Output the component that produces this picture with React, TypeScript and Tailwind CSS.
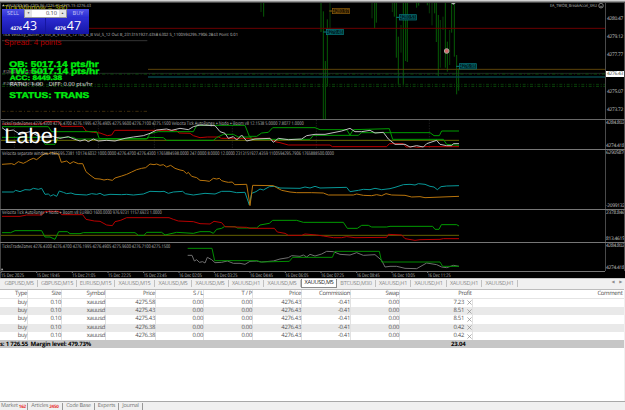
import type { ReactNode } from "react";
import clsx from "clsx";

const chartTabs = [
  { name: "GBPUSD,M5", width: "w-[37px]" },
  { name: "GBPUSD,M15", width: "w-[39px]" },
  { name: "EURUSD,M15", width: "w-[38px]" },
  { name: "XAUUSD,M15", width: "w-[40px]" },
  { name: "XAUUSD,M5", width: "w-[37px]" },
  { name: "XAUUSD,M5", width: "w-[37px]" },
  { name: "XAUUSD,H1", width: "w-[35px]" },
  { name: "XAUUSD,M5", width: "w-[37px]" },
  { name: "XAUUSD,M5", width: "w-[36px]", active: true },
  { name: "BTCUSD,M30", width: "w-[39px]" },
  { name: "XAUUSD,H1", width: "w-[35px]" },
  { name: "XAUUSD,H1", width: "w-[36px]" },
  { name: "XAUUSD,H1", width: "w-[35px]" },
  { name: "XAUUSD,H1", width: "w-[36px]" },
];

const headers = [
  "Type",
  "Size",
  "Symbol",
  "Price",
  "S / L",
  "T / P",
  "Price",
  "Commission",
  "Swap",
  "Profit",
  "Comment",
];

const positions = [
  { open: "4275.58", profit: "7.23" },
  { open: "4275.43", profit: "8.51" },
  { open: "4275.43", profit: "8.51" },
  { open: "4276.38", profit: "0.42" },
  { open: "4276.38", profit: "0.42" },
];

const times = [
  { x: 3, label: "15 Dec 2025" },
  { x: 110, label: "15 Dec 19:45" },
  { x: 217, label: "15 Dec 21:05" },
  { x: 324, label: "15 Dec 22:25" },
  { x: 431, label: "15 Dec 23:45" },
  { x: 537, label: "16 Dec 02:05" },
  { x: 643, label: "16 Dec 03:25" },
  { x: 750, label: "16 Dec 04:45" },
  { x: 856, label: "16 Dec 06:05" },
  { x: 963, label: "16 Dec 07:25" },
  { x: 1070, label: "16 Dec 08:45" },
  { x: 1176, label: "16 Dec 10:05" },
  { x: 1283, label: "16 Dec 11:25" },
];

// x, high, low, dim
const bars: [number, number, number, boolean?][] = [
  [783, 9, 36, true],
  [791, 9, 50],
  [963, 9, 96],
  [970, 34, 357],
  [976, 183, 357],
  [982, 58, 258],
  [990, 9, 90, true],
  [1116, 9, 55, true],
  [1124, 9, 85],
  [1129, 9, 68],
  [1177, 9, 36, true],
  [1183, 9, 50],
  [1189, 9, 173],
  [1195, 110, 256],
  [1203, 75, 158, true],
  [1210, 9, 256],
  [1217, 9, 183],
  [1222, 9, 186],
  [1250, 9, 23],
  [1256, 9, 17],
  [1282, 9, 16],
  [1288, 9, 40, true],
  [1296, 9, 76, true],
  [1304, 9, 40],
  [1309, 9, 126],
  [1315, 45, 228],
  [1321, 60, 203, true],
  [1329, 50, 90, true],
  [1336, 9, 203],
  [1342, 125, 215],
  [1349, 90, 195, true],
  [1355, 9, 98],
  [1363, 9, 170],
  [1370, 165, 283],
  [1376, 205, 272],
];

const cell = "flex items-center justify-end border-r border-[#e2e2e2]";
const columns =
  "grid grid-cols-[28px_34px_44px_50px_48px_49px_49px_49px_49px_73px_1fr]";

// Plot coordinates run at three units per pixel so the lines can sit between pixels.
function Pane({
  className,
  viewBox,
  scale,
  children,
}: {
  className: string;
  viewBox: string;
  scale?: ReactNode;
  children: ReactNode;
}) {
  return (
    <div className={clsx("flex w-full shrink-0", className)}>
      <svg
        viewBox={viewBox}
        preserveAspectRatio="none"
        className="h-full w-[605px] shrink-0"
        fontFamily="'Open Sans', sans-serif"
      >
        {children}
      </svg>
      <div className="flex h-full min-w-0 flex-1 flex-col overflow-hidden border-x border-[#4a4a4a] text-[4.9px] leading-[6px] tracking-[-0.3px] whitespace-nowrap text-[#c4c4c4]">
        {scale}
      </div>
    </div>
  );
}

function Plot({ color, points }: { color: string; points: string }) {
  return (
    <polyline
      points={points}
      fill="none"
      stroke={color}
      strokeWidth="3"
      strokeLinejoin="round"
    />
  );
}

function Txt({
  x,
  y,
  w,
  size = 15,
  fill = "#bdbdbd",
  children,
  ...rest
}: {
  x: number;
  y: number;
  w: number;
  size?: number;
  fill?: string;
  children: string;
  fontWeight?: string;
  fontFamily?: string;
  stroke?: string;
}) {
  return (
    <text
      x={x}
      y={y}
      textLength={w}
      lengthAdjust="spacingAndGlyphs"
      fontSize={size}
      fill={fill}
      {...rest}
    >
      {children}
    </text>
  );
}

function PriceTag({
  x,
  y,
  color,
  fill,
  label,
}: {
  x: number;
  y: number;
  color: string;
  fill: string;
  label: string;
}) {
  return (
    <g>
      <path d={`M${x - 9} ${y + 8}h9`} stroke={color} strokeWidth="3" />
      <rect x={x} y={y} width="51" height="16" fill={fill} stroke={color} strokeWidth="2" />
      <Txt x={x + 2} y={y + 14} w={47} size={17} fill={color}>
        {label}
      </Txt>
    </g>
  );
}

function OneClickTrading() {
  return (
    <div className="absolute top-[6px] left-[2px] flex h-[25px] w-[87px] flex-col bg-[#1616a0] font-['Open_Sans',sans-serif] text-white">
      <div className="flex h-[9px] shrink-0 items-center text-[5.6px] leading-none text-[#c4c4f4]">
        <div className="flex h-full w-[22px] items-center justify-center bg-gradient-to-b from-[#5050e8] to-[#2828d0]">
          SELL
        </div>
        <div className="flex h-full w-[43px] items-center border border-[#999] bg-white text-[#444]">
          <span className="flex h-full w-[7px] items-center justify-center bg-[#e4e4e4] text-[3px]">▼</span>
          <span className="flex-1 pr-[2px] text-right">0.10</span>
          <span className="flex h-full w-[7px] items-center justify-center bg-[#e4e4e4] text-[3px]">▲</span>
        </div>
        <div className="flex h-full flex-1 items-center justify-center bg-gradient-to-b from-[#5050e8] to-[#2828d0]">
          BUY
        </div>
      </div>
      <div className="flex h-[16px] gap-px">
        {["43", "47"].map((pips) => (
          <div
            key={pips}
            className="flex flex-1 items-baseline justify-end gap-px bg-gradient-to-b from-[#2c2cd2] to-[#1414a4] pr-[8px] leading-[16px]"
          >
            <span className="text-[5px] font-bold">4276</span>
            <span className="text-[12.4px]">{pips}</span>
          </div>
        ))}
      </div>
    </div>
  );
}

function PricePane() {
  const bold = {
    fontWeight: "bold",
    fontFamily: "'Liberation Sans', Arial, sans-serif",
    fill: "#00f010",
    stroke: "#00f010",
  };

  return (
    <div className="relative shrink-0">
      <Pane
        className="h-[117px] border-b border-[#686868]"
        viewBox="0 9 1815 348"
        scale={
          <div className="flex flex-col gap-[12.2px] pt-[13px] pl-[1px]">
            <span>4280.47</span>
            <span>4279.12</span>
            <span>4277.77</span>
            <span className="-ml-[1px] bg-white pl-[1px] text-[#444]">4276.43</span>
            <span>4275.07</span>
            <span>4273.72</span>
          </div>
        }
      >
        <g strokeWidth="3">
          {bars.map(([x, high, low, dim]) => (
            <path key={x} d={`M${x} ${high}V${low}`} stroke={dim ? "#083c08" : "#065c06"} />
          ))}
          <path d="M267 85H1815" stroke="#6c0000" />
          <path d="M6 122H442" stroke="#333" />
          <path d="M444 208H1815" stroke="#5d440a" />
          <path d="M6 220H1815" stroke="#3a3a40" strokeWidth="2" />
          <path d="M6 222H1815" stroke="#0a4d0a" strokeDasharray="10 6 3 6" />
          <path d="M444 231H1815" stroke="#06454a" strokeWidth="5" />
          <path d="M6 253H1815" stroke="#093a09" strokeDasharray="9 5 3 5" />
          <path d="M6 259H1815" stroke="#0a480a" strokeDasharray="9 5 3 5" />
          <path d="M6 334H442" stroke="#3d2c0c" strokeDasharray="10 6 3 6" />
        </g>

        <PriceTag x={997} y={25} color="#92600c" fill="#241700" label="4280.97" />
        <PriceTag x={979} y={88} color="#078086" fill="#002428" label="4279.48" />
        <PriceTag x={1198} y={44} color="#078086" fill="#002428" label="4280.53" />
        <PriceTag x={1378} y={191} color="#078086" fill="#002428" label="4276.98" />
        <circle cx="1340" cy="153" r="7" fill="#cf6868" stroke="#a9a9a0" strokeWidth="3" />
        <path d="M1353 9h14l-7 5z" fill="#bbb" />

        <path d="M6 19l4-6 4 6z" fill="#ccc" />
        <Txt x={12} y={30} w={190} size={22} fill="#aaa400" fontFamily="'Liberation Sans', Arial, sans-serif">
          TickWindow = 360
        </Txt>
        <Txt x={20} y={20} w={253} size={13}>
          XAUUSD,M5  4275.96 4276.71 4275.15 4276.43
        </Txt>
        <Txt x={8} y={108} w={706} size={13}>
          Tick Velocity_Buffer_0 Vol_B_9 Vol_S_12 Tot_B_B Vol_S_12 Out B_2313151927.4358 6302 S_1100594295.7906 2843 Point 0.01
        </Txt>
        <Txt x={12} y={136} w={172} size={24} fill="#b80000" fontFamily="'Liberation Sans', Arial, sans-serif">
          Spread: 4 points
        </Txt>
        <Txt x={10} y={220} w={120} size={13}>
          #125603491 buy 0.10 xauusd
        </Txt>
        <Txt x={10} y={255} w={112} size={13}>
          #125603174 buy 0.10 xauusd
        </Txt>
        <Txt x={28} y={201} w={268} size={25} {...bold}>
          OB: 5017.14 pts/hr
        </Txt>
        <Txt x={28} y={223} w={270} size={25} {...bold}>
          TW: 5017.14 pts/hr
        </Txt>
        <Txt x={29} y={240} w={157} size={20} {...bold}>
          ACC: 8449.38
        </Txt>
        <Txt x={29} y={257} w={100} size={17} fill="#e0e0e0">
          RATIO: 1.00
        </Txt>
        <Txt x={146} y={257} w={132} size={17} fill="#e0e0e0">
          DIFF: 0.00 pts/hr
        </Txt>
        <Txt x={28} y={293} w={240} size={25} {...bold}>
          STATUS: TRANS
        </Txt>
        <Txt x={1650} y={22} w={141} size={13}>
          EA_TWOB_BreakAccel_XAU
        </Txt>
        <g fill="none" stroke="#aaa" strokeWidth="2">
          <circle cx="1803" cy="17" r="7" />
          <path d="M1800 15v1M1806 15v1M1799 19q4 4 8 0" />
        </g>
      </Pane>
      <div className="absolute top-0 left-0 h-full w-px bg-[#444]" />
      <OneClickTrading />
    </div>
  );
}

function ScaleRange({ high, low }: { high: string; low: string }) {
  return (
    <div className="flex h-full flex-col justify-between">
      <span>{high}</span>
      <span>{low}</span>
    </div>
  );
}

function IndicatorPanes() {
  return (
    <>
      <Pane
        className="h-[30px] border-b border-[#767676]"
        viewBox="0 15 1815 87"
        scale={<ScaleRange high="4284.802" low="4274.418" />}
      >
        <path d="M43 15v87M295 15v87M463 15v87M697 15v87M949 15v87M1288 15v87" stroke="#2c2c2c" strokeWidth="2" strokeDasharray="4 4" />
        <path d="M3 76H1377" stroke="#6c6a00" strokeWidth="3" />
        <Plot
          color="#be0000"
          points="6,27 125,27 135,20 176,20 184,34 248,34 258,48 280,52 300,54 322,62 335,60 344,46 528,46 537,54 570,55 580,62 600,68 622,66 655,66 664,70 810,70 825,80 840,83 865,90 990,90 997,95 1160,95 1168,86 1210,86 1218,96 1240,95 1254,97 1270,95 1377,95"
        />
        <Plot
          color="#009c00"
          points="6,67 125,67 135,88 165,88 175,67 220,67 230,72 440,72 450,56 475,50 580,50 590,32 615,31 735,31 748,64 770,64 785,54 805,52 818,38 945,38 960,44 1040,44 1050,60 1060,44 1168,41 1178,73 1330,73 1340,88 1377,91"
        />
        <Plot
          color="#009c00"
          points="6,35 145,35 155,50 290,50 298,71 440,71 448,67 490,68 500,76 640,76 650,68 670,58 700,58 715,66 750,66 760,73 930,73 940,61 1075,61 1085,53 1290,53 1302,62 1318,62 1325,48 1377,48"
        />
        <Plot
          color="#c0c0c0"
          points="6,38 20,48 40,45 60,58 90,50 120,66 150,62 180,70 205,65 222,72 240,78 255,74 265,80 280,72 295,78 320,76 345,78 375,70 400,66 430,62 450,55 470,45 500,42 515,46 540,40 565,44 580,35 600,30 645,32 660,50 675,55 685,70 700,65 710,75 725,60 740,78 765,72 810,70 820,82 835,70 865,74 905,72 920,62 945,58 975,58 1005,52 1025,48 1050,40 1065,50 1085,50 1110,46 1125,54 1150,52 1165,72 1185,88 1215,88 1230,96 1250,92 1270,96 1280,86 1310,76 1320,88 1340,92 1355,92 1360,86 1377,86"
        />
        <Txt x={6} y={30} w={905}>
          TicksTradeZones 4276.4300 4276.4700 4276.1995 4276.4905 4275.9600 4276.7100 4275.1500  Velocita Tick AutoRange + Nodo + Boom v8 12.1538 5.0000 7.8077 1.0000
        </Txt>
        <Txt x={13} y={83} w={160} size={63} fill="#fff" fontFamily="'Liberation Sans', Arial, sans-serif">
          Label
        </Txt>
      </Pane>

      <Pane
        className="h-[60px] border-b border-[#767676]"
        viewBox="0 105 1815 177"
        scale={<ScaleRange high="629058708" low="-20991327" />}
      >
        <Plot
          color="#089898"
          points="6,231 40,231 47,226 60,230 75,224 90,225 100,220 115,223 125,220 135,238 145,237 152,243 160,239 170,244 178,228 190,232 200,236 213,234 225,238 260,240 275,236 290,238 300,235 312,241 330,238 365,239 380,238 400,240 430,237 450,229 480,230 492,229 505,235 520,231 548,229 556,236 580,240 615,235 645,237 665,229 690,229 710,233 735,232 748,270 755,235 768,230 780,222 790,225 808,215 825,214 840,219 900,220 915,216 930,219 945,214 960,219 1040,217 1050,230 1075,226 1090,223 1110,224 1125,220 1145,224 1170,221 1185,217 1210,209 1230,208 1245,210 1255,206 1275,208 1290,214 1302,216 1312,224 1323,215 1340,213 1377,212"
        />
        <Plot
          color="#b8740c"
          points="6,148 35,146 43,149 55,140 70,145 80,140 90,134 100,130 110,134 125,122 135,115 145,117 155,112 165,116 175,116 184,142 200,138 210,146 220,140 235,146 248,146 258,170 270,180 285,191 300,192 312,195 322,193 337,196 345,189 365,183 380,178 395,171 410,164 425,160 437,158 450,147 462,149 470,147 480,151 490,149 500,156 512,151 525,160 540,165 550,167 560,176 565,172 575,184 590,188 600,196 615,197 628,199 640,190 650,192 658,190 665,197 675,200 685,202 697,201 704,209 740,208 750,272 758,211 820,212 830,218 845,226 870,231 890,233 935,233 970,234 985,240 1060,240 1070,237 1090,241 1115,242 1130,239 1145,242 1158,236 1175,240 1215,241 1235,246 1260,245 1275,248 1377,244"
        />
        <Txt x={6} y={120} w={996}>
          Velocita separate window 1485595.2381 10174.6032 1000.0000 4276.4700 4276.4300 1765884598.0000 247.0000 8.0000 12.0000 2313151927.4359 1100594295.7906 1765888500.0000
        </Txt>
      </Pane>

      <Pane
        className="h-[33px] border-b border-[#767676]"
        viewBox="0 15 1815 96"
        scale={<ScaleRange high="2378.8461" low="813.4615" />}
      >
        <path d="M3 91H1377" stroke="#646100" strokeWidth="3" />
        <Plot
          color="#009c00"
          points="6,83 32,83 45,77 125,77 135,96 150,96 165,103 176,80 202,80 210,86 240,86 250,83 405,83 415,91 432,91 440,82 485,82 495,90 530,82 580,85 600,80 630,80 640,85 650,73 665,70 673,65 705,65 712,69 770,69 780,60 808,55 818,46 890,46 910,52 1030,52 1042,70 1072,70 1085,61 1105,61 1115,66 1160,66 1170,64 1298,64 1305,73 1317,73 1324,59 1370,59 1377,63"
        />
        <Plot
          color="#b80000"
          points="6,34 60,34 80,30 125,30 135,19 177,19 185,29 248,29 258,43 283,48 300,49 320,60 337,62 345,50 362,46 380,38 507,38 520,43 535,48 580,50 600,56 630,57 642,49 665,53 675,65 740,67 750,70 823,70 832,81 855,85 865,91 905,91 915,87 950,90 970,93 1000,98 1025,98 1040,95 1065,98 1160,97 1165,88 1205,90 1215,101 1245,106 1260,104 1320,103 1330,101 1377,101"
        />
        <Txt x={6} y={28} w={479}>
          Velocita Tick AutoRange + Nodo + Boom v8 EURBO 1600.0000 976.9231 1157.6923 1.0000
        </Txt>
      </Pane>

      <Pane
        className="h-[28px]"
        viewBox="0 114 1815 84"
        scale={<ScaleRange high="4284.802" low="4274.418" />}
      >
        <Plot
          color="#6f6f6f"
          points="563,151 576,151 583,168 590,164 598,172 608,170 615,174 622,157 635,164 645,173 665,172 682,168 700,175 720,175 735,178 750,169 770,168 785,171 820,168 840,162 865,158 875,152 900,154 910,150 920,156 930,148 945,153 965,147 980,139 1000,140 1020,148 1050,150 1070,143 1090,151 1125,149 1145,166 1155,186 1170,184 1190,184 1215,190 1250,191 1280,174 1310,179 1325,186 1340,188 1360,181 1377,184"
        />
        <Plot
          color="#008c00"
          points="563,130 636,130 644,167 772,167 780,171 868,169 878,157 997,157 1005,139 1138,139 1145,171 1320,171 1328,184 1377,184"
        />
        <Txt x={6} y={129} w={505}>
          TicksTradeZones 4276.4300 4276.4700 4276.1995 4276.4905 4275.9600 4276.7100 4275.1500
        </Txt>
        <path d="M3 196l3-7 4 7z" fill="#bbb" />
      </Pane>

      <svg viewBox="0 198 1875 21" className="h-[7px] w-full shrink-0" fontFamily="'Open Sans', sans-serif">
        <path d="M3 199.500H1815" stroke="#777" strokeWidth="3" />
        {times.map(({ x, label }) => (
          <g key={x}>
            <path d={`M${x} 200v4`} stroke="#777" strokeWidth="3" />
            <Txt x={x} y={215} w={69}>
              {label}
            </Txt>
          </g>
        ))}
      </svg>
    </>
  );
}

function ChartTabs() {
  return (
    <div className="flex h-[11px] shrink-0 items-stretch border-t border-[#c9c9c9] bg-[#f0f0f0] pl-px text-[5.6px] leading-none tracking-[-0.3px] text-[#8c8c8c]">
      {chartTabs.map((tab, i) => (
        <div
          key={i}
          className={clsx(
            "flex shrink-0 items-center justify-center whitespace-nowrap",
            tab.width,
            tab.active
              ? "mb-px border border-t-0 border-[#8a8a8a] bg-white text-[#222]"
              : "mt-px mb-[2px] border-r border-[#c0c0c0]",
          )}
        >
          {tab.name}
        </div>
      ))}
      <div className="mb-[3px] ml-auto flex items-center gap-[5px] pr-[3px] text-[4px]">
        <span>◀</span>
        <span>▶</span>
      </div>
    </div>
  );
}

function TradeTable() {
  return (
    <div className="mr-[1px] flex flex-1 flex-col border-t border-[#bcbcbc] bg-white text-[5.9px] leading-none tracking-[-0.3px] text-[#505050]">
      <div className={clsx(columns, "h-[8.6px] shrink-0 border-b border-[#e4e4e4]")}>
        {headers.map((header, i) => (
          <div key={i} className={clsx(cell, i > 8 && "border-r-0 pr-[1.5px]")}>
            {header}
          </div>
        ))}
      </div>
      {positions.map(({ open, profit }, i) => (
        <div key={i} className={clsx(columns, "h-[8.32px] shrink-0", i % 2 === 1 && "bg-[#e9e9e9]")}>
          <div className={cell}>buy</div>
          <div className={cell}>0.10</div>
          <div className={cell}>xauusd</div>
          <div className={cell}>{open}</div>
          <div className={cell}>0.00</div>
          <div className={cell}>0.00</div>
          <div className={cell}>4276.43</div>
          <div className={cell}>-0.41</div>
          <div className={cell}>0.00</div>
          <div className={clsx(cell, "gap-[3px]")}>
            {profit}
            <svg viewBox="0 0 6 6" className="h-[5px] w-[5px]" stroke="#888" strokeWidth="0.8">
              <path d="M0.500 0.500l5 5M5.500 0.500l-5 5" />
            </svg>
          </div>
          <div />
        </div>
      ))}
      <div className="flex h-[8px] shrink-0 items-center bg-[#c6c6c6] text-[6px] font-bold tracking-[-0.2px] whitespace-pre text-black">
        <span className="w-[464px]">s: 1 726.55  Margin level: 479.73%</span>
        <span className="-ml-[13px]">23.04</span>
      </div>
    </div>
  );
}

function TerminalTabs() {
  const tabs = [
    { name: "Market", count: "162", width: "w-[28px]" },
    { name: "Articles", count: "2450", width: "w-[35px]" },
    { name: "Code Base", width: "w-[32px]" },
    { name: "Experts", width: "w-[24px]" },
    { name: "Journal", width: "w-[24px]" },
  ];

  return (
    <div className="flex h-[9px] shrink-0 items-center border-t border-[#a8a8a8] bg-[#f0f0f0] text-[5.5px] leading-none tracking-[-0.25px] text-[#787878]">
      {tabs.map((tab) => (
        <div
          key={tab.name}
          className={clsx(
            "flex h-[7px] shrink-0 items-center justify-center gap-px border-r border-[#999] whitespace-nowrap",
            tab.width,
          )}
        >
          {tab.name}
          {tab.count && (
            <span className="pt-[2px] text-[4.6px] font-bold text-[#e83030]">{tab.count}</span>
          )}
        </div>
      ))}
    </div>
  );
}

export default function App() {
  return (
    <div className="flex h-[410px] w-[625px] flex-col overflow-hidden bg-[#f0f0f0] font-['Open_Sans',sans-serif] [text-rendering:geometricPrecision]">
      <div className="flex h-[278px] shrink-0 flex-col bg-black">
        <div className="h-[3px] shrink-0 border-t border-b border-t-[#d0d0d0] border-b-[#484848] bg-[#909090]" />
        <PricePane />
        <div className="flex flex-1 flex-col border-l border-[#444]">
          <div className="-ml-px flex flex-col">
            <IndicatorPanes />
          </div>
        </div>
      </div>
      <ChartTabs />
      <TradeTable />
      <TerminalTabs />
    </div>
  );
}
